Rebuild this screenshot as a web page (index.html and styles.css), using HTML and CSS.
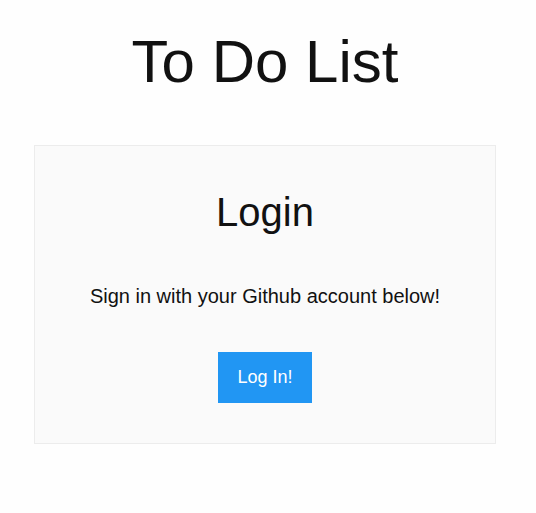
FILE: index.html
```html
<!DOCTYPE html>
<html>
<head>
<meta charset="utf-8">
<link rel="stylesheet" href="styles.css">
<title>To Do List</title>
</head>
<body>
<div class="page">
  <h1 class="title">To Do List</h1>
  <div class="card">
    <h2 class="card-title">Login</h2>
    <p class="card-text">Sign in with your Github account below!</p>
    <button class="btn">Log In!</button>
  </div>
</div>
</body>
</html>
```
FILE: styles.css
```css
html, body {
  margin: 0;
  padding: 0;
  background: #fefefe;
}
body {
  font-family: "Liberation Sans", Arial, sans-serif;
  color: #111;
}
.page {
  width: 462px;
  margin-left: 34px;
  display: flex;
  flex-direction: column;
  align-items: center;
}
.title {
  margin: 27px 0 48px 0;
  font-size: 60px;
  line-height: 70px;
  font-weight: normal;
  color: #111;
}
.card {
  box-sizing: border-box;
  width: 462px;
  background: #fafafa;
  border: 1px solid #ececec;
  padding: 42px 0 40px 0;
  display: flex;
  flex-direction: column;
  align-items: center;
}
.card-title {
  margin: 0 0 48px 0;
  font-size: 40px;
  line-height: 48px;
  font-weight: normal;
  color: #111;
}
.card-text {
  margin: 0 0 44px 0;
  font-size: 20px;
  line-height: 24px;
  color: #111;
}
.btn {
  font-family: "Liberation Sans", Arial, sans-serif;
  font-size: 18px;
  line-height: 21px;
  padding: 15px 19px;
  background: #2196f3;
  color: #fff;
  border: none;
  border-radius: 0;
  margin: 0;
}
```
